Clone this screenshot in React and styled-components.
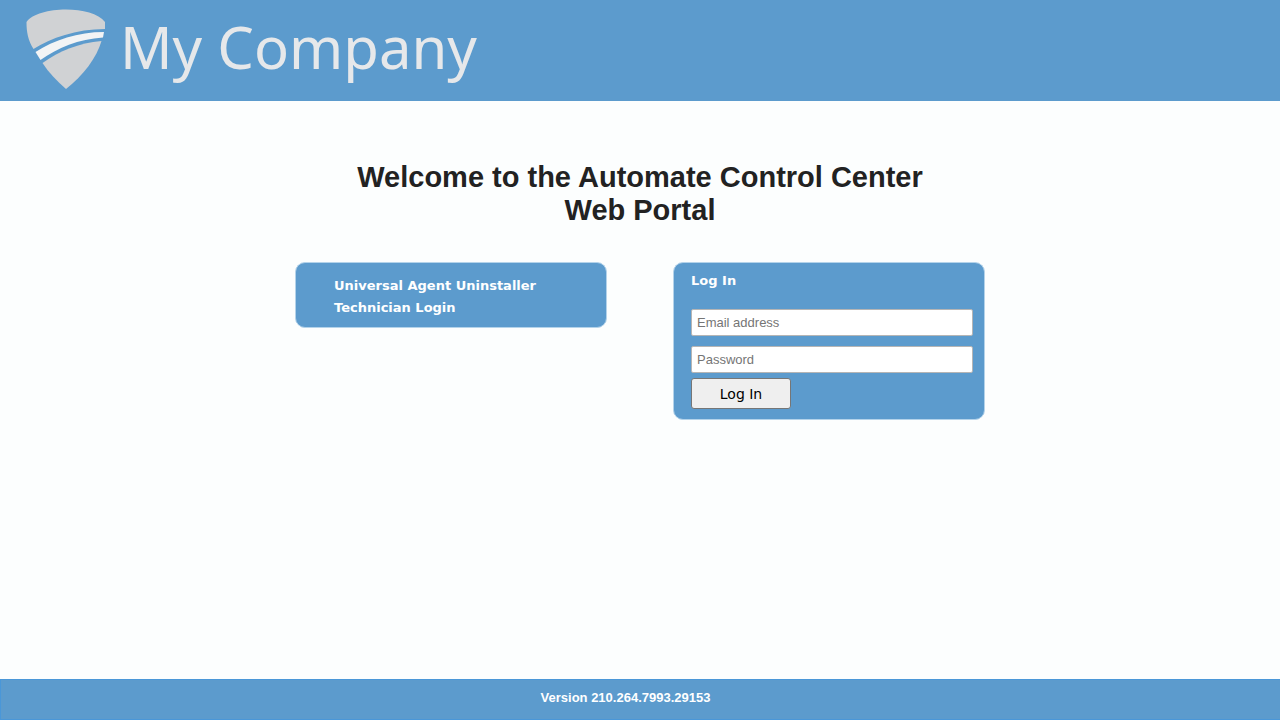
import React from 'react';
import styled, { createGlobalStyle } from 'styled-components';

const GlobalStyle = createGlobalStyle`
  *, *::before, *::after { box-sizing: border-box; }
  body {
    margin: 0;
    background: #fcfefe;
    color: #222222;
    font-family: "Liberation Sans", Arial, sans-serif;
  }
`;

const Page = styled.div`
  display: flex;
  flex-direction: column;
  min-height: 100vh;
`;

const Header = styled.header`
  display: flex;
  align-items: flex-start;
  gap: 14px;
  height: 101px;
  padding: 9px 26px;
  background: #5c9bcd;
`;

const Shield = styled.svg`
  flex: none;
  width: 80px;
  height: 80px;
`;

const Brand = styled.span`
  color: #e6e8ea;
  font-family: "Noto Sans", "Open Sans", sans-serif;
  font-size: 58px;
  line-height: 76px;
  white-space: nowrap;
`;

const Main = styled.main`
  flex: 1;
  width: 100%;
  max-width: 690px;
  margin: 0 auto;
  padding-top: 60px;
`;

const Title = styled.h1`
  margin: 0 auto 35px;
  max-width: 600px;
  font-size: 29px;
  line-height: 33px;
  text-align: center;
`;

const Columns = styled.div`
  display: flex;
  align-items: flex-start;
  justify-content: space-between;
  gap: 24px;
`;

const panel = `
  flex: 0 1 312px;
  border: 1px solid #b4d3ea;
  border-radius: 10px;
  background: #5c9bcd;
  color: #ffffff;
  font-family: "DejaVu Sans", Verdana, sans-serif;
  font-size: 13px;
  line-height: 22px;
`;

const LinkPanel = styled.nav`
  ${panel}
  padding: 12px 38px 8px;
`;

const PortalLink = styled.a`
  display: block;
  color: inherit;
  font-weight: bold;
  text-decoration: none;
`;

const LoginPanel = styled.form`
  ${panel}
  display: flex;
  flex-direction: column;
  padding: 7px 11px 10px 17px;
`;

const PanelTitle = styled.h2`
  margin: 0 0 17px;
  font-size: 13px;
  line-height: 22px;
`;

const Field = styled.input`
  width: 100%;
  height: 27px;
  margin-bottom: ${(p) => (p.$last ? 5 : 10)}px;
  padding: 0 5px;
  border: 1px solid #b5b5b5;
  border-radius: 2px;
  background: #ffffff;
  font-family: "Liberation Sans", Arial, sans-serif;
  font-size: 13px;

  &::placeholder { color: #757575; }
`;

const Submit = styled.button`
  width: 100px;
  height: 31px;
  padding: 0;
  border: 1px solid #767676;
  border-radius: 3px;
  background: #efefef;
  color: #000000;
  font-family: "DejaVu Sans", Verdana, sans-serif;
  font-size: 14px;
`;

const Footer = styled.footer`
  height: 41px;
  padding: 9px 30px 0 0;
  border: 1px solid #4a97d8;
  border-right: 0;
  background: #5c9bcd;
  color: #ffffff;
  font-size: 13px;
  font-weight: bold;
  line-height: 18px;
  text-align: center;
`;

export default function App() {
  return (
    <Page>
      <GlobalStyle />
      <Header>
        <Shield viewBox="0 0 80 80" aria-hidden="true">
          <path fill="#d0d2d4" d="M0.5 13 C12 -3 66 -4 79 13 L79 20 C50 20 25 29 7.500 40 C2 31 0.500 23 0.500 13Z" />
          <path fill="#f3f4f5" d="M9.500 43 C28 31 52 23 78 23 L77 28.500 C53 30 31 39 14.500 51Z" />
          <path fill="#d0d2d4" d="M16.500 54 C33 42 53 34 75.500 32 C71 48 57 67 40 80 C31 72 23 64 16.500 54Z" />
        </Shield>
        <Brand>My Company</Brand>
      </Header>
      <Main>
        <Title>Welcome to the Automate Control Center Web Portal</Title>
        <Columns>
          <LinkPanel aria-label="Portal">
            <PortalLink href="#uninstaller">Universal Agent Uninstaller</PortalLink>
            <PortalLink href="#technician">Technician Login</PortalLink>
          </LinkPanel>
          <LoginPanel onSubmit={(e) => e.preventDefault()}>
            <PanelTitle>Log In</PanelTitle>
            <Field type="email" placeholder="Email address" aria-label="Email address" />
            <Field type="password" placeholder="Password" aria-label="Password" $last />
            <Submit type="submit">Log In</Submit>
          </LoginPanel>
        </Columns>
      </Main>
      <Footer>Version 210.264.7993.29153</Footer>
    </Page>
  );
}
